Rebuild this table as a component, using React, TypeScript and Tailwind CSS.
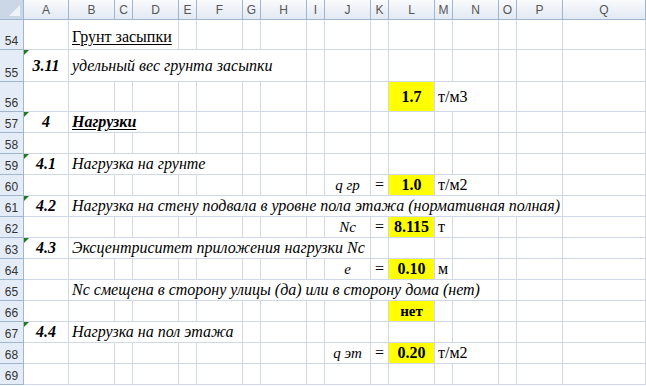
import React from 'react'

type Cell = {
  col: number
  span?: number
  content?: React.ReactNode
  className?: string
  mark?: boolean
}

type Row = {
  n: number
  h: string
  cells: Cell[]
}

const COLS =
  'grid grid-cols-[24px_45px_46px_18px_46px_18px_46px_18px_46px_18px_46px_18px_46px_18px_46px_18px_46px_83px]'

const SPAN: Record<number, string> = {
  1: '',
  2: 'col-span-2',
  3: 'col-span-3',
  5: 'col-span-5',
  7: 'col-span-7',
  9: 'col-span-9',
  13: 'col-span-13',
  15: 'col-span-15',
}

const LETTERS = ['A', 'B', 'C', 'D', 'E', 'F', 'G', 'H', 'I', 'J', 'K', 'L', 'M', 'N', 'O', 'P', 'Q']

// column numbers: 2 = A, 3 = B ... 11 = J, 12 = K, 13 = L, 14 = M
const num = 'justify-center font-bold bg-[#ffff00]'
const idx = 'justify-center font-bold italic'
const text = 'pl-[3px] italic whitespace-nowrap'
const label = 'justify-center italic text-[15px]'
const eq = 'justify-center'
const unit = 'pl-[3px] whitespace-nowrap'

const rows: Row[] = [
  {
    n: 54,
    h: 'h-[30px]',
    cells: [{ col: 3, span: 3, className: 'pl-[3px] pt-[4px] whitespace-nowrap', content: <span className="underline underline-offset-2">Грунт засыпки</span> }],
  },
  {
    n: 55,
    h: 'h-[32px]',
    cells: [
      { col: 2, className: idx, content: '3.11', mark: true },
      { col: 3, span: 7, className: text, content: 'удельный вес грунта засыпки' },
    ],
  },
  {
    n: 56,
    h: 'h-[30px]',
    cells: [
      { col: 13, className: num, content: '1.7' },
      { col: 14, span: 2, className: unit, content: 'т/м3' },
    ],
  },
  {
    n: 57,
    h: 'h-[21px]',
    cells: [
      { col: 2, className: idx, content: '4', mark: true },
      { col: 3, span: 3, className: 'pl-[3px] whitespace-nowrap font-bold italic', content: <span className="underline underline-offset-2">Нагрузки</span> },
    ],
  },
  { n: 58, h: 'h-[21px]', cells: [] },
  {
    n: 59,
    h: 'h-[21px]',
    cells: [
      { col: 2, className: idx, content: '4.1', mark: true },
      { col: 3, span: 5, className: text, content: 'Нагрузка на грунте' },
    ],
  },
  {
    n: 60,
    h: 'h-[21px]',
    cells: [
      { col: 11, className: label, content: 'q гр' },
      { col: 12, className: eq, content: '=' },
      { col: 13, className: num, content: '1.0' },
      { col: 14, span: 2, className: unit, content: 'т/м2' },
    ],
  },
  {
    n: 61,
    h: 'h-[21px]',
    cells: [
      { col: 2, className: idx, content: '4.2', mark: true },
      { col: 3, span: 15, className: text, content: 'Нагрузка на стену подвала в уровне пола этажа (нормативная полная)' },
    ],
  },
  {
    n: 62,
    h: 'h-[21px]',
    cells: [
      { col: 11, className: label, content: 'Nc' },
      { col: 12, className: eq, content: '=' },
      { col: 13, className: num, content: '8.115' },
      { col: 14, className: unit, content: 'т' },
    ],
  },
  {
    n: 63,
    h: 'h-[21px]',
    cells: [
      { col: 2, className: idx, content: '4.3', mark: true },
      { col: 3, span: 9, className: text, content: 'Эксцентриситет приложения нагрузки Nc' },
    ],
  },
  {
    n: 64,
    h: 'h-[21px]',
    cells: [
      { col: 11, className: label, content: 'e' },
      { col: 12, className: eq, content: '=' },
      { col: 13, className: num, content: '0.10' },
      { col: 14, className: unit, content: 'м' },
    ],
  },
  {
    n: 65,
    h: 'h-[21px]',
    cells: [{ col: 3, span: 13, className: text, content: 'Nc смещена в сторону улицы (да) или в сторону дома (нет)' }],
  },
  {
    n: 66,
    h: 'h-[21px]',
    cells: [{ col: 13, className: 'justify-center font-bold text-[15px] bg-[#ffff00]', content: 'нет' }],
  },
  {
    n: 67,
    h: 'h-[21px]',
    cells: [
      { col: 2, className: idx, content: '4.4', mark: true },
      { col: 3, span: 5, className: text, content: 'Нагрузка на пол этажа' },
    ],
  },
  {
    n: 68,
    h: 'h-[21px]',
    cells: [
      { col: 11, className: label, content: 'q эт' },
      { col: 12, className: eq, content: '=' },
      { col: 13, className: num, content: '0.20' },
      { col: 14, span: 2, className: unit, content: 'т/м2' },
    ],
  },
  { n: 69, h: 'h-[21px]', cells: [] },
]

function SheetRow({ row }: { row: Row }) {
  const out: React.ReactNode[] = []
  let c = 2
  while (c <= 18) {
    const cell = row.cells.find((x) => x.col === c)
    const span = cell?.span ?? 1
    out.push(
      <div
        key={c}
        className={`relative flex items-center border-r border-b border-[#d0d7e5] leading-none ${SPAN[span]} ${cell?.className ?? ''}`}
      >
        {cell?.mark && (
          <span className="absolute left-0 top-0 h-0 w-0 border-t-[5px] border-r-[5px] border-t-[#1f7a1f] border-r-transparent" />
        )}
        {cell?.content}
      </div>
    )
    c += span
  }

  return (
    <div className={`${COLS} ${row.h}`}>
      <div className="flex items-end justify-center pb-[2px] bg-[#e4ecf7] border-r border-b border-[#9eb6ce] font-[family-name:Liberation_Sans,sans-serif] text-[12px] leading-none text-[#333]">
        {row.n}
      </div>
      {out}
    </div>
  )
}

export default function App() {
  return (
    <div className="w-[646px] h-[386px] overflow-hidden bg-white font-[family-name:Liberation_Serif,serif] text-[16px] text-black">
      {/* заголовки столбцов */}
      <div className={`${COLS} h-[20px]`}>
        <div className="relative bg-[#cbd7e7] border-r border-b border-[#9eb6ce]">
          <span className="absolute right-[3px] bottom-[3px] h-0 w-0 border-l-[11px] border-b-[11px] border-l-transparent border-b-[#eef3f9]" />
        </div>
        {LETTERS.map((l) => (
          <div
            key={l}
            className="flex items-center justify-center bg-linear-to-b from-[#f9fbfd] to-[#e2e9f3] border-r border-b border-[#9eb6ce] font-[family-name:Liberation_Sans,sans-serif] text-[12px] text-[#555]"
          >
            {l}
          </div>
        ))}
      </div>

      {rows.map((r) => (
        <SheetRow key={r.n} row={r} />
      ))}
    </div>
  )
}
